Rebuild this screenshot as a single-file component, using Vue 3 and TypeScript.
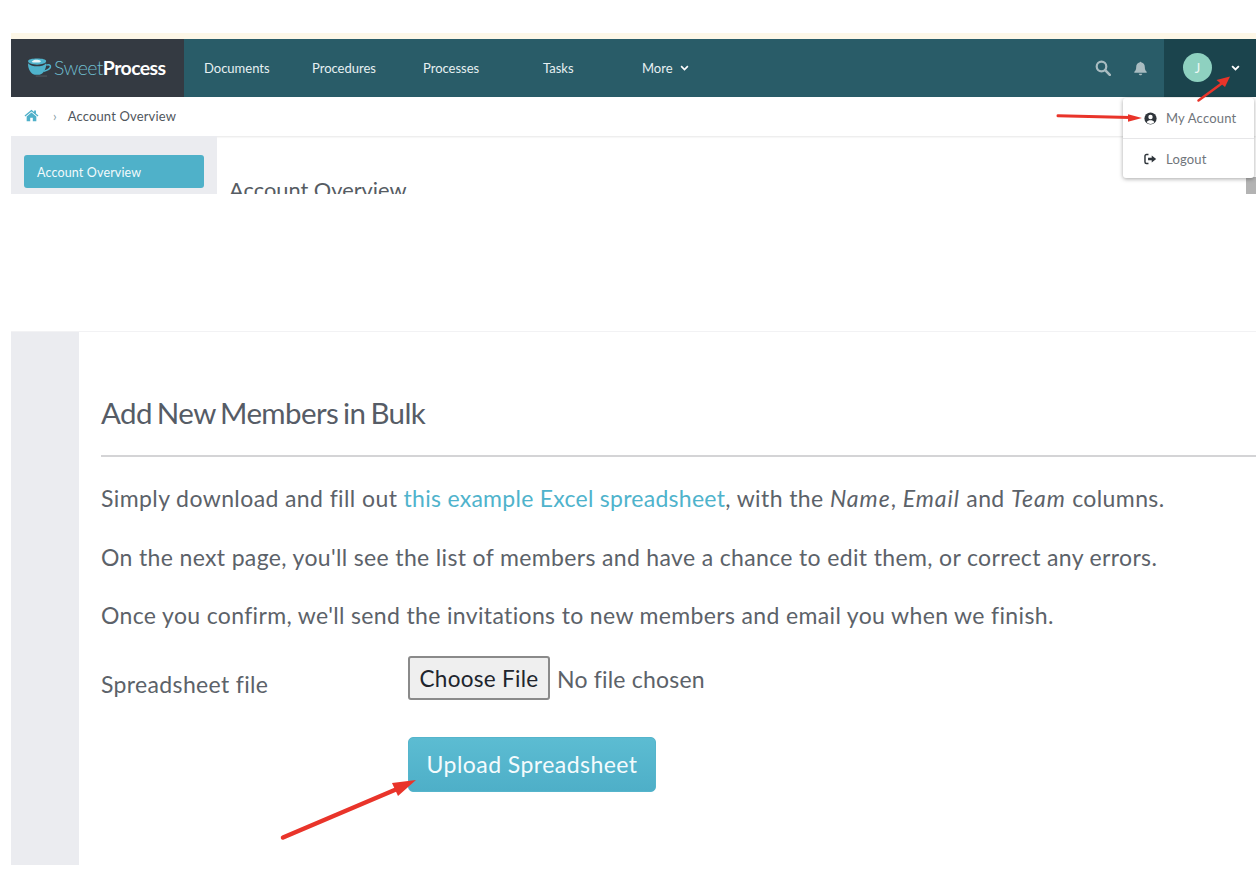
<script setup lang="ts">
const navItems = [
  { label: 'Documents', width: 108 },
  { label: 'Procedures', width: 111 },
  { label: 'Processes', width: 120 },
  { label: 'Tasks', width: 99 },
]
</script>

<template>
  <div class="page">
    <section class="shot-top">
      <header class="topbar">
        <div class="brand">
          <svg class="cup" viewBox="0 0 26 20" width="25" height="19">
            <path d="M1 3.500C1 1.500 5 .6 10.500 .6S20 1.500 20 3.500 16 7 10.500 7 1 5.500 1 3.500Z" fill="#4fb3cc" />
            <path d="M5 3.600c2-2 5-2 7-1.500s3 1 2 2-4 .8-6 .6S4.500 4.200 5 3.600Z" fill="#e8f4f7" />
            <path d="M1 5.500C3 8 7 8.800 10.500 8.800S18 8 20 5.500C20.500 11 17 17 13 17.500H8C4 17 .5 11 1 5.500Z" fill="#4fb3cc" />
            <path d="M20 7.500c3-1 5 0 4.500 2S21 13 17.500 14" fill="none" stroke="#4fb3cc" stroke-width="1.600" />
            <path d="M9 19h12" stroke="#555d63" stroke-width="1" />
          </svg>
          <span class="brand-name"><span class="sweet">Sweet</span><span class="process">Process</span></span>
        </div>
        <nav class="nav">
          <a v-for="item in navItems" :key="item.label" class="nav-item" :style="{ width: item.width + 'px' }">{{ item.label }}</a>
          <a class="nav-item more">More
            <svg viewBox="0 0 12 8" width="9" height="6"><path d="M1.500 1.500 6 6l4.500-4.500" fill="none" stroke="#fff" stroke-width="2.200" /></svg>
          </a>
        </nav>
        <div class="tools">
          <svg class="tool" viewBox="0 0 16 16" width="16" height="16">
            <circle cx="6.500" cy="6.500" r="4.800" fill="none" stroke="#a9bcc1" stroke-width="2.200" />
            <path d="M10.200 10.200 14.800 14.800" stroke="#a9bcc1" stroke-width="2.600" stroke-linecap="round" />
          </svg>
          <svg class="tool" viewBox="0 0 16 16" width="15" height="16">
            <path d="M8 1.200c.6 0 1 .4 1 .9 2.300.5 3.600 2.300 3.600 4.700 0 3 .8 4 2 5.300v.9H1.400v-.9c1.200-1.300 2-2.300 2-5.300 0-2.400 1.300-4.200 3.600-4.700 0-.5.400-.9 1-.9Z" fill="#a9bcc1" />
            <path d="M6.200 14.200h3.600c0 1-.8 1.600-1.800 1.600s-1.800-.6-1.800-1.600Z" fill="#a9bcc1" />
          </svg>
        </div>
        <div class="user">
          <span class="avatar">J</span>
          <svg viewBox="0 0 12 8" width="9" height="6"><path d="M1.500 1.500 6 6l4.500-4.500" fill="none" stroke="#fff" stroke-width="2.400" /></svg>
        </div>
      </header>

      <div class="crumbs">
        <svg viewBox="0 0 16 14" width="15" height="13">
          <path d="M8 .8 .5 7l.9 1L8 2.600 14.600 8l.9-1-2.700-2.200V1.500h-2v1.700Z" fill="#4fb0c9" />
          <path d="M8 3.800 2.800 8.100v5.100h3.800V9.500h2.800v3.700h3.800V8.100Z" fill="#4fb0c9" />
        </svg>
        <span class="crumb-sep">›</span>
        <span class="crumb-current">Account Overview</span>
      </div>

      <div class="overview">
        <aside class="side">
          <a class="side-link">Account Overview</a>
        </aside>
        <div class="overview-main">
          <h2>Account Overview</h2>
        </div>
        <div class="scroll-thumb"></div>
      </div>

      <div class="menu">
        <a class="menu-item">
          <svg viewBox="0 0 16 16" width="13" height="13">
            <circle cx="8" cy="8" r="7.500" fill="#2f353b" />
            <circle cx="8" cy="6.200" r="2.700" fill="#fff" />
            <path d="M3.300 12.600C4.200 10.600 6 10 8 10s3.800.6 4.700 2.600C11.500 14 9.800 14.700 8 14.700S4.500 14 3.300 12.600Z" fill="#fff" />
          </svg>
          My Account
        </a>
        <a class="menu-item">
          <svg viewBox="0 0 16 14" width="13" height="12">
            <path d="M5.500 1.500H3A1.800 1.800 0 0 0 1.200 3.300v7.400A1.800 1.800 0 0 0 3 12.500h2.500" fill="none" stroke="#2f353b" stroke-width="1.800" />
            <path d="M5 5.400h4.500V2.600L15 7l-5.500 4.400V8.600H5Z" fill="#2f353b" />
          </svg>
          Logout
        </a>
      </div>
    </section>

    <section class="shot-bottom">
      <aside class="rail"></aside>
      <main class="content">
        <h1>Add New Members in Bulk</h1>
        <p class="first">Simply download and fill out <a class="link">this example Excel spreadsheet</a>, with the <em>Name</em>, <em>Email</em> and <em>Team</em> columns.</p>
        <p>On the next page, you'll see the list of members and have a chance to edit them, or correct any errors.</p>
        <p>Once you confirm, we'll send the invitations to new members and email you when we finish.</p>
        <div class="file-row">
          <label class="file-label">Spreadsheet file</label>
          <div class="file-control">
            <button class="file-btn" type="button">Choose File</button>
            <span class="file-name">No file chosen</span>
          </div>
        </div>
        <button class="upload" type="button">Upload Spreadsheet</button>
      </main>
    </section>

    <!-- red annotation arrows drawn over the screenshots -->
    <svg class="arrows" viewBox="0 0 1256 878" width="1256" height="878">
      <g stroke="#e9342a" stroke-linecap="round" fill="none">
        <path d="M1198.500 100.500 1221 84" stroke-width="2.500" />
        <path d="M1058 115.800 1130 117.400" stroke-width="3" />
        <path d="M283 837.500 397 789" stroke-width="4.500" />
      </g>
      <g fill="#e9342a">
        <path d="M1230 76.500 1216.500 80 1225 87Z" />
        <path d="M1142 118 1128 114.300V121.700Z" />
        <path d="M416 780 392 783 398 796Z" />
      </g>
    </svg>
  </div>
</template>

<style scoped>
.page {
  position: relative;
  width: 1256px;
  height: 878px;
  overflow: hidden;
  background: #fff;
  font-family: Lato, "Liberation Sans", sans-serif;
  color: #5c6269;
}

.shot-top {
  position: relative;
  height: 155px;
  margin: 33px 0 0 11px;
  border-top: 6px solid #fdf7e7;
  overflow: hidden;
}

.topbar {
  display: flex;
  height: 58px;
  background: #295c68;
  color: #fff;
  font-size: 13px;
}

.brand {
  display: flex;
  align-items: center;
  gap: 2px;
  width: 173px;
  padding: 0 0 2px 16px;
  box-sizing: border-box;
  background: #343a42;
}

.brand-name {
  font-size: 19.500px;
  letter-spacing: -0.6px;
}

.sweet {
  color: #6fbccd;
  font-weight: 300;
}

.process {
  color: #fff;
  font-weight: 700;
}

.nav {
  display: flex;
  align-items: center;
  padding-left: 20px;
}

.nav-item {
  flex: none;
  color: #e6f0f2;
}

.more {
  display: flex;
  align-items: center;
  gap: 7px;
}

.tools {
  display: flex;
  align-items: center;
  gap: 22px;
  margin-left: auto;
  padding-right: 16px;
}

.user {
  display: flex;
  align-items: center;
  gap: 19px;
  width: 92px;
  padding: 0 0 1px 19px;
  box-sizing: border-box;
  background: #1b444d;
}

.avatar {
  display: flex;
  align-items: center;
  justify-content: center;
  width: 29px;
  height: 29px;
  border-radius: 50%;
  background: #8ed1c0;
  color: #eef8f5;
  font-size: 13px;
}

.crumbs {
  display: flex;
  align-items: center;
  height: 39px;
  padding: 0 0 2px 13px;
  box-sizing: border-box;
  box-shadow: 0 1px 2px rgba(0, 0, 0, 0.1);
  position: relative;
  font-size: 13px;
}

.crumb-sep {
  margin: 0 11px 0 14px;
  color: #8aa0a6;
}

.crumb-current {
  color: #50565d;
  letter-spacing: 0.15px;
}

.overview {
  display: flex;
  position: relative;
  height: 58px;
}

.side {
  width: 206px;
  padding: 19px 13px 0;
  box-sizing: border-box;
  background: #ebecf0;
}

.side-link {
  display: block;
  width: 180px;
  height: 33px;
  padding-left: 13px;
  box-sizing: border-box;
  border-radius: 3px;
  background: #4fb1c9;
  color: #f2fafc;
  font-size: 12.500px;
  letter-spacing: 0.15px;
  line-height: 35px;
}

.overview-main {
  padding-left: 12px;
}

.overview-main h2 {
  margin: 41px 0 0;
  font-size: 21.800px;
  font-weight: 400;
  line-height: 26px;
  color: #565c63;
}

.scroll-thumb {
  position: absolute;
  top: 41px;
  right: 0;
  width: 10px;
  height: 17px;
  background: #b3b3b3;
}

.menu {
  position: absolute;
  top: 59px;
  left: 1112px;
  width: 131px;
  height: 80px;
  box-sizing: border-box;
  border-radius: 3px;
  background: #fff;
  box-shadow: 0 1px 4px rgba(0, 0, 0, 0.35);
  font-size: 13px;
}

.menu-item {
  display: flex;
  align-items: center;
  gap: 9px;
  height: 40px;
  padding-left: 21px;
  box-sizing: border-box;
  color: #70757b;
  letter-spacing: 0.2px;
}

.menu-item + .menu-item {
  border-top: 1px solid #e6e6e8;
}

.shot-bottom {
  display: flex;
  height: 533px;
  margin: 137px 0 0 11px;
  border-top: 1px solid #f2f2f4;
}

.rail {
  flex: none;
  width: 68px;
  background: #ebecf0;
}

.content {
  flex: 1;
  padding: 61px 0 0 22px;
  font-size: 23px;
  letter-spacing: 0.35px;
  line-height: 30px;
}

h1 {
  margin: 0 0 26px;
  padding-bottom: 22px;
  border-bottom: 2px solid #d4d4d6;
  font-size: 29.500px;
  font-weight: 400;
  letter-spacing: -0.6px;
  word-spacing: -2px;
  line-height: 40px;
  color: #565c66;
}

.content p {
  margin: 0 0 28.500px;
}

.content p.first {
  letter-spacing: 0.4px;
}

.content p.first em {
  letter-spacing: 1px;
}

.content p.first .link {
  letter-spacing: 0.27px;
}

.link {
  color: #4fb3cc;
}

.file-row {
  display: flex;
  align-items: flex-start;
  margin-top: -3px;
}

.file-label {
  width: 307px;
  padding-top: 13px;
}

.file-control {
  display: flex;
  align-items: center;
  gap: 7px;
}

.file-btn {
  width: 142px;
  height: 44px;
  padding: 2px 0 0;
  border: 2px solid #8a8a8a;
  border-radius: 3px;
  background: #efefef;
  color: #20242c;
  font: inherit;
  font-size: 22.500px;
  letter-spacing: 0.3px;
}

.file-name {
  padding-top: 2px;
  letter-spacing: 0.2px;
}

.upload {
  display: block;
  width: 248px;
  height: 55px;
  margin: 37px 0 0 307px;
  padding: 0;
  border: 1px solid #55b5cc;
  border-radius: 5px;
  background: linear-gradient(#5cbcd2, #4eafc8);
  color: #f4fbfd;
  font: inherit;
  letter-spacing: 0.45px;
}

.arrows {
  position: absolute;
  top: 0;
  left: 0;
  pointer-events: none;
}
</style>
